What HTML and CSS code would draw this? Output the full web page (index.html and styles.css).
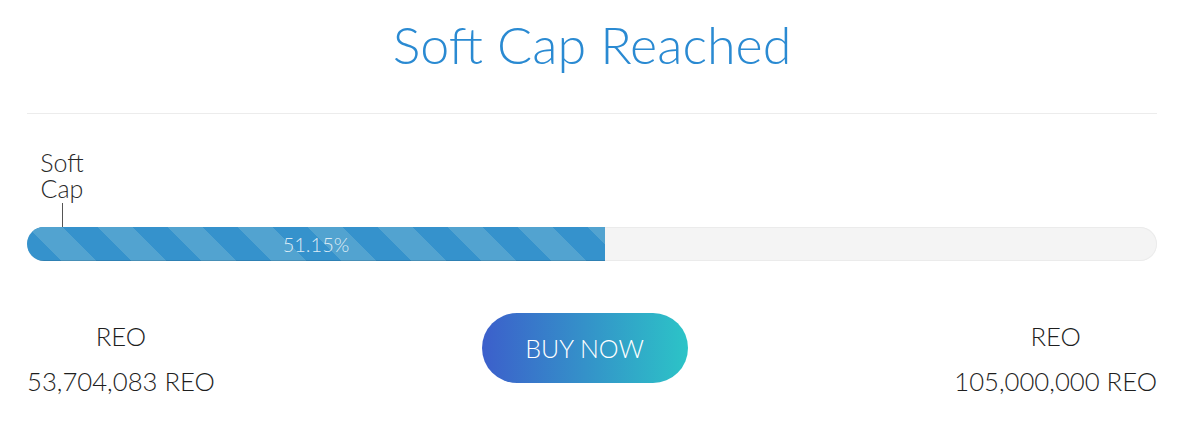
FILE: index.html
```html
<!DOCTYPE html>
<html>
<head>
<meta charset="utf-8">
<link rel="stylesheet" href="styles.css">
</head>
<body>
<div class="sale">
  <h1 class="title">Soft Cap Reached</h1>
  <hr class="divider">
  <div class="progress-wrap">
    <div class="marker" style="left: 35px;">
      <span class="marker-label">Soft Cap</span>
      <span class="marker-tick"></span>
    </div>
    <div class="track">
      <div class="fill" style="width: 51.15%;">51.15%</div>
    </div>
  </div>
  <div class="bottom">
    <div class="amount">
      <div>REO</div>
      <div>53,704,083 REO</div>
    </div>
    <a class="buy" href="#">BUY NOW</a>
    <div class="amount">
      <div>REO</div>
      <div>105,000,000 REO</div>
    </div>
  </div>
</div>
</body>
</html>
```
FILE: styles.css
```css
html, body {
  margin: 0;
  padding: 0;
  background: #ffffff;
}
body {
  font-family: Lato, "Open Sans", sans-serif;
  font-weight: 300;
}
.sale {
  width: 1130px;
  margin-left: 27px;
}
.title {
  margin: 14px 0 0;
  font-size: 52px;
  line-height: 60px;
  font-weight: 300;
  color: #2a8ad2;
  text-align: center;
}
.divider {
  margin: 39px 0 0;
  border: 0;
  border-top: 1px solid #ececec;
  height: 0;
}
.progress-wrap {
  position: relative;
  padding-top: 114px;
  margin-top: -1px;
}
.marker {
  position: absolute;
  top: 36px;
  transform: translateX(-50%);
  display: flex;
  flex-direction: column;
  align-items: center;
}
.marker-label {
  width: 50px;
  font-size: 25px;
  line-height: 26px;
  color: #2a2a2a;
  text-align: center;
}
.marker-tick {
  width: 1px;
  height: 24px;
  margin-top: 2px;
  background: #555;
}
.track {
  height: 34px;
  border-radius: 17px;
  background: #f4f4f4;
  box-shadow: inset 0 0 0 1px #ebebeb;
  overflow: hidden;
}
.fill {
  height: 100%;
  background-color: #3592cc;
  background-image: linear-gradient(45deg,
    #52a3d0 25%, transparent 25%, transparent 50%,
    #52a3d0 50%, #52a3d0 75%, transparent 75%, transparent);
  background-size: 70px 70px;
  background-position: 0 0;
  box-shadow: inset 0 -1px 0 rgba(0, 0, 0, 0.12);
  color: rgba(255, 255, 255, 0.82);
  font-size: 20px;
  line-height: 34px;
  text-align: center;
}
.bottom {
  margin-top: 52px;
  display: flex;
  justify-content: space-between;
  align-items: flex-start;
}
.amount {
  font-size: 25.7px;
  line-height: 45px;
  color: #1e1e1e;
  text-align: center;
  margin-top: 1px;
}
.buy {
  display: flex;
  align-items: center;
  justify-content: center;
  width: 206px;
  height: 70px;
  border-radius: 35px;
  background: linear-gradient(90deg, #3c5fcb 0%, #2cc4c7 100%);
  color: #ffffff;
  font-size: 25px;
  text-decoration: none;
}
```
